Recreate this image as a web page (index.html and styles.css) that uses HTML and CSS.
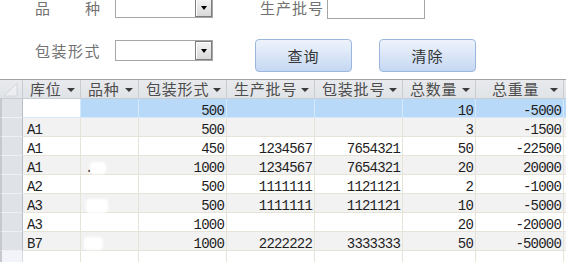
FILE: index.html
```html
<!DOCTYPE html>
<html>
<head>
<meta charset="utf-8">
<link rel="stylesheet" href="styles.css">
</head>
<body>
<div class="form">
  <div class="frow r1">
    <span class="lbl just"><span>品</span><span>种</span></span>
    <div class="combo"><span class="drop"></span></div>
    <span class="lbl lbl2">生产批号</span>
    <div class="tbox"></div>
  </div>
  <div class="frow r2">
    <span class="lbl">包装形式</span>
    <div class="combo"><span class="drop"></span></div>
    <button class="btn b1">查询</button>
    <button class="btn b2">清除</button>
  </div>
</div>
<div class="sheet">
  <div class="row head">
    <div class="c sel corner"><svg width="22" height="18" viewBox="0 0 22 18"><polygon points="4,16 17,3 17,16" fill="#eceef2" stroke="#d3d6db" stroke-width="1"/></svg></div>
    <div class="c h">库位<i></i></div>
    <div class="c h">品种<i></i></div>
    <div class="c h">包装形式<i></i></div>
    <div class="c h">生产批号<i></i></div>
    <div class="c h">包装批号<i></i></div>
    <div class="c h">总数量<i></i></div>
    <div class="c h hc">总重量<i></i></div>
    <div class="c h"></div>
  </div>
  <div class="row cur">
    <div class="c sel"></div><div class="c t focus"></div><div class="c t"></div><div class="c n">500</div><div class="c n"></div><div class="c n"></div><div class="c n">10</div><div class="c n">-5000</div><div class="c"></div>
  </div>
  <div class="row alt">
    <div class="c sel"></div><div class="c t">A1</div><div class="c t"></div><div class="c n">500</div><div class="c n"></div><div class="c n"></div><div class="c n">3</div><div class="c n">-1500</div><div class="c"></div>
  </div>
  <div class="row">
    <div class="c sel"></div><div class="c t">A1</div><div class="c t"></div><div class="c n">450</div><div class="c n">1234567</div><div class="c n">7654321</div><div class="c n">50</div><div class="c n">-22500</div><div class="c"></div>
  </div>
  <div class="row alt">
    <div class="c sel"></div><div class="c t">A1</div><div class="c t"><span class="dot">.</span><span class="blob m1"></span></div><div class="c n">1000</div><div class="c n">1234567</div><div class="c n">7654321</div><div class="c n">20</div><div class="c n">20000</div><div class="c"></div>
  </div>
  <div class="row">
    <div class="c sel"></div><div class="c t">A2</div><div class="c t"></div><div class="c n">500</div><div class="c n">1111111</div><div class="c n">1121121</div><div class="c n">2</div><div class="c n">-1000</div><div class="c"></div>
  </div>
  <div class="row alt">
    <div class="c sel"></div><div class="c t">A3</div><div class="c t"><span class="blob m2"></span></div><div class="c n">500</div><div class="c n">1111111</div><div class="c n">1121121</div><div class="c n">10</div><div class="c n">-5000</div><div class="c"></div>
  </div>
  <div class="row">
    <div class="c sel"></div><div class="c t">A3</div><div class="c t"></div><div class="c n">1000</div><div class="c n"></div><div class="c n"></div><div class="c n">20</div><div class="c n">-20000</div><div class="c"></div>
  </div>
  <div class="row alt">
    <div class="c sel"></div><div class="c t">B7</div><div class="c t"><span class="blob m3"></span></div><div class="c n">1000</div><div class="c n">2222222</div><div class="c n">3333333</div><div class="c n">50</div><div class="c n">-50000</div><div class="c"></div>
  </div>
  <div class="row newrow">
    <div class="c sel"></div><div class="c"></div><div class="c"></div><div class="c"></div><div class="c"></div><div class="c"></div><div class="c"></div><div class="c"></div><div class="c"></div>
  </div>
</div>
</body>
</html>
```

FILE: styles.css
```css
html, body {
  margin: 0;
  padding: 0;
  background: #ffffff;
  overflow: hidden;
  width: 566px;
  height: 262px;
}
body {
  font-family: "Noto Sans CJK SC", "Noto Sans", sans-serif;
}
.form {
  margin-top: -3px;
  padding-left: 35px;
}
.frow {
  display: flex;
  align-items: center;
}
.r1 {
  height: 21px;
}
.r2 {
  margin-top: 22px;
  align-items: flex-start;
}
.lbl {
  font-size: 15px;
  letter-spacing: 1.5px;
  color: #727272;
  width: 65px;
  margin-right: 15px;
  line-height: 21px;
  white-space: nowrap;
}
.just {
  display: flex;
  justify-content: space-between;
  letter-spacing: 0;
}
.lbl2 {
  margin-left: 47px;
  width: 62px;
  margin-right: 5px;
  letter-spacing: 1px;
}
.combo {
  box-sizing: border-box;
  width: 98px;
  height: 21px;
  border: 1px solid #a6a6a6;
  background: #fff;
  display: flex;
  justify-content: flex-end;
}
.drop {
  box-sizing: border-box;
  width: 17px;
  height: 19px;
  border: 1px solid #7d7d7d;
  box-shadow: inset 1px 1px 0 #ffffff;
  background: linear-gradient(#f4f4f4, #d9d9d9);
  display: flex;
  align-items: center;
  justify-content: center;
}
.drop::after {
  content: "";
  width: 0;
  height: 0;
  border-left: 3.5px solid transparent;
  border-right: 3.5px solid transparent;
  border-top: 4px solid #000;
}
.tbox {
  box-sizing: border-box;
  width: 98px;
  height: 21px;
  margin-top: 1px;
  border: 1px solid #a6a6a6;
  background: #fff;
}
.btn {
  box-sizing: border-box;
  width: 97px;
  height: 33px;
  margin-top: -1px;
  border: 1px solid #9cb7dd;
  border-radius: 4px;
  background: linear-gradient(#eef3fc, #c5d8f2);
  color: #333;
  font-family: "Noto Sans CJK SC", sans-serif;
  font-size: 15px;
  letter-spacing: 1px;
  padding: 0;
}
.b1 { margin-left: 42px; }
.b2 { margin-left: 27px; }

.sheet {
  margin-top: 7px;
  border-top: 1px solid #a3a3a3;
  width: 650px;
}
.row {
  display: grid;
  grid-template-columns: 23px 58px 58px 88px 88px 88px 73px 88px 90px;
  height: 19px;
}
.c {
  box-sizing: border-box;
  height: 19px;
  border-right: 1px solid #e6e3d8;
  border-bottom: 1px solid #e6e3d8;
  position: relative;
  font-family: "Liberation Mono", monospace;
  font-size: 14px;
  letter-spacing: -0.8px;
  line-height: 18px;
  padding-top: 3px;
  color: #1e1e1e;
  white-space: nowrap;
}
.t { padding-left: 4px; }
.n { text-align: right; padding-right: 2px; }
.head .c {
  height: 19px;
  background: linear-gradient(#e8eaed, #e0e3e7);
  border-right: 1px solid #c9ccd1;
  border-bottom: 1px solid #c9ccd1;
}
.h {
  font-family: "Noto Sans CJK SC", sans-serif;
  font-size: 15px;
  letter-spacing: 0.8px;
  color: #4d4d4d;
  padding: 0 0 0 7px;
  line-height: 18px;
}
.hc { padding-left: 16px; }
.h i {
  position: absolute;
  right: 5px;
  top: 8px;
  width: 0;
  height: 0;
  border-left: 4px solid transparent;
  border-right: 4px solid transparent;
  border-top: 4px solid #3a3a3a;
}
.corner { padding: 0; }
.corner svg { display: block; }
.sel {
  background: #dfe2e7;
  border-right: 1px solid #b9bdc4;
  border-bottom: 1px solid #eef0f3;
  border-left: 2px solid #c5c9cf;
  padding: 0;
}
.head .sel { border-left: 0; }
.cur .c { background: #b9d9f8; border-right-color: #d6e8fb; border-bottom-color: #d6e8fb; }
.cur .sel { background: #dfe2e7; border-right-color: #b9bdc4; border-bottom-color: #eef0f3; }
.cur .focus { background: #ffffff; }
.alt .c { background: #f2f2f2; }
.alt .sel { background: #dfe2e7; }
.newrow .sel { background: #f3f4f9; border-right-color: #d8dbe2; }
.dot {
  position: absolute;
  left: 4px;
  top: 3px;
}
.blob {
  position: absolute;
  background: #ffffff;
  border-radius: 4px;
  filter: blur(1px);
}
.m1 { left: 9px; top: 6px; width: 16px; height: 12px; }
.m2 { left: 5px; top: 5px; width: 22px; height: 14px; }
.m3 { left: 3px; top: 5px; width: 19px; height: 13px; }
```
